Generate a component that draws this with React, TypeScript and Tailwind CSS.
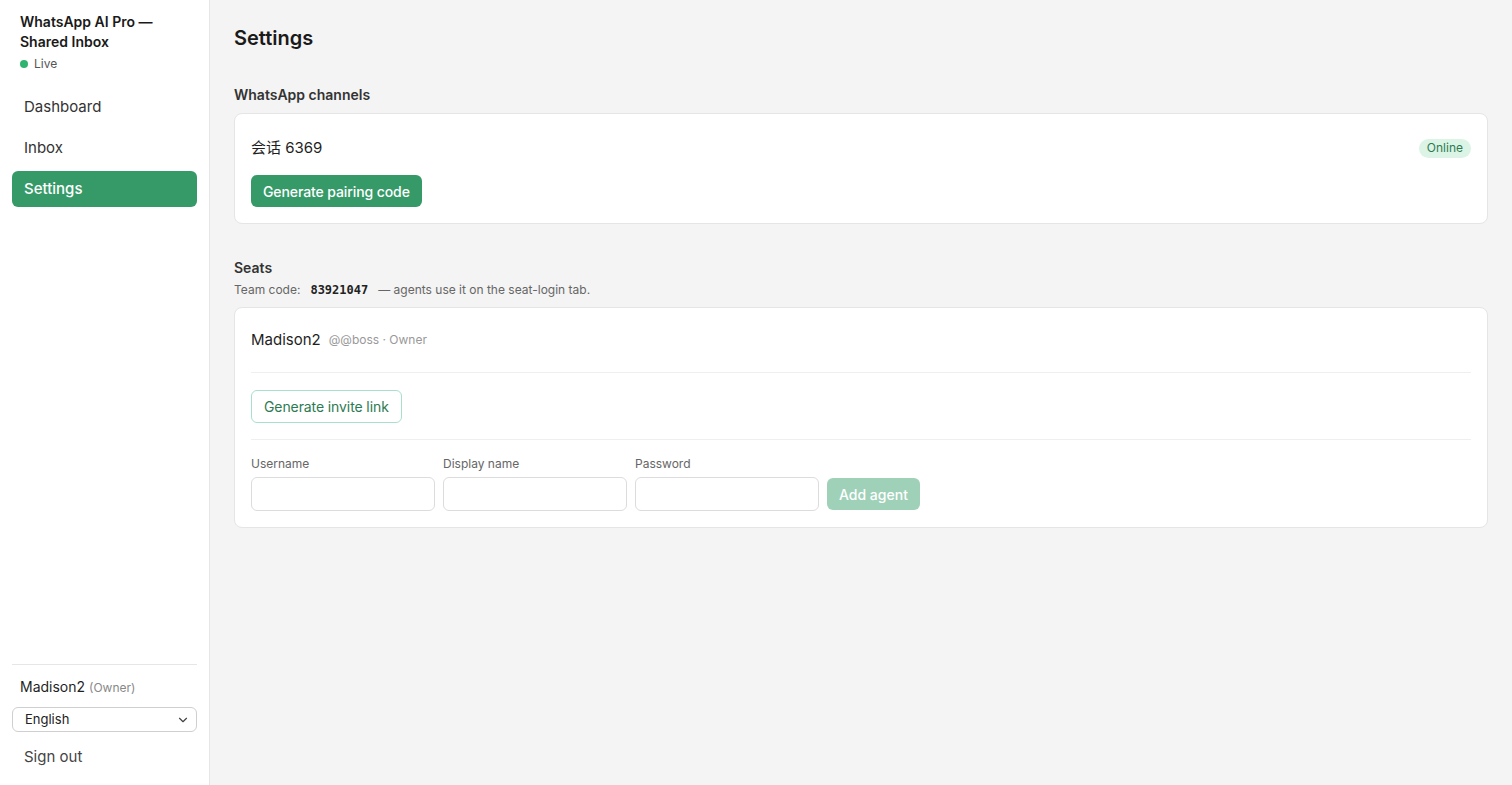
import { ChevronDown } from "lucide-react"

const font = { fontFamily: "Inter, 'Noto Sans CJK SC', sans-serif" }

function NavItem({ label, active }: { label: string; active?: boolean }) {
  return (
    <div
      className={
        active
          ? "h-9 flex items-center px-3 rounded-md bg-[#359a68] text-white text-[15px] font-medium"
          : "h-9 flex items-center px-3 rounded-md text-[#333] text-[15px]"
      }
    >
      {label}
    </div>
  )
}

function Field({ label }: { label: string }) {
  return (
    <div className="flex flex-col">
      <label className="text-[12px] text-[#666] leading-4 mb-[5px]">{label}</label>
      <input className="w-[184px] h-[34px] rounded-md border border-[#dcdcdc] bg-white px-2 text-sm outline-none" />
    </div>
  )
}

export default function App() {
  return (
    <div className="flex h-[785px] w-full bg-[#f4f4f4] text-[#1f1f1f]" style={font}>
      <aside className="w-[210px] shrink-0 bg-white border-r border-[#e6e6e6] flex flex-col px-3 pt-3 pb-[10px]">
        <div className="px-2">
          <div className="text-[14px] font-semibold leading-5 text-[#1a1a1a]">
            WhatsApp AI Pro —<br />Shared Inbox
          </div>
          <div className="flex items-center gap-1.5 text-[12px] leading-4 text-[#555] mt-1">
            <span className="w-2 h-2 rounded-full bg-[#2fb36e]" />
            Live
          </div>
        </div>
        <nav className="flex flex-col gap-[5px] mt-[17px]">
          <NavItem label="Dashboard" />
          <NavItem label="Inbox" />
          <NavItem label="Settings" active />
        </nav>
        <div className="mt-auto border-t border-[#e6e6e6] pt-3">
          <div className="px-2 text-[14px] leading-5 text-[#1f1f1f]">
            Madison2 <span className="text-[12px] text-[#888]">(Owner)</span>
          </div>
          <div className="mt-[9px] h-[25px] rounded-md border border-[#cfcfcf] flex items-center justify-between pl-3 pr-1.5 text-[13px] text-[#222]">
            English
            <ChevronDown size={14} strokeWidth={2} className="text-[#444]" />
          </div>
          <div className="px-3 h-9 flex items-center text-[15px] text-[#444] mt-[7px]">Sign out</div>
        </div>
      </aside>

      <main className="flex-1 px-6 pt-6">
        <h1 className="text-[20px] leading-7 font-semibold text-[#1a1a1a]">Settings</h1>

        <section className="mt-[33px]">
          <h2 className="text-[14px] leading-5 font-semibold text-[#333] mb-2">WhatsApp channels</h2>
          <div className="bg-white border border-[#e5e5e5] rounded-lg px-4 pt-4 pb-4">
            <div className="h-9 flex items-center justify-between">
              <span className="text-[15px] text-[#1f1f1f]">会话 6369</span>
              <span className="px-2 h-[19px] flex items-center rounded-full bg-[#dcf4e6] text-[#2d7a52] text-[12px]">
                Online
              </span>
            </div>
            <button className="mt-[9px] h-8 px-3 rounded-md bg-[#359a68] text-white text-[14px] font-medium tracking-[-0.1px]">
              Generate pairing code
            </button>
          </div>
        </section>

        <section className="mt-[34px]">
          <h2 className="text-[14px] leading-5 font-semibold text-[#333]">Seats</h2>
          <p className="text-[12px] leading-5 text-[#666] mt-0.5 mb-[7px] flex items-center">
            Team code:
            <code className="mx-2.5 font-bold text-[#222]" style={{ fontFamily: "'DejaVu Sans Mono', monospace" }}>
              83921047
            </code>
            — agents use it on the seat-login tab.
          </p>
          <div className="bg-white border border-[#e5e5e5] rounded-lg px-4">
            <div className="pt-4 pb-4 border-b border-[#efefef]">
              <div className="h-8 flex items-center gap-2">
                <span className="text-[15px] text-[#1f1f1f]">Madison2</span>
                <span className="text-[12px] text-[#999]">@@boss · Owner</span>
              </div>
            </div>
            <div className="pt-[17px] pb-[16px] border-b border-[#efefef]">
              <button className="h-[33px] px-3 rounded-md border border-[#a8e0cc] text-[#2d7a52] text-[14px] bg-white tracking-[-0.1px]">
                Generate invite link
              </button>
            </div>
            <div className="pt-4 pb-4 flex items-end gap-2">
              <Field label="Username" />
              <Field label="Display name" />
              <Field label="Password" />
              <button className="h-8 mb-px px-3 rounded-md bg-[#9fd1b9] text-white text-[14px] font-medium">
                Add agent
              </button>
            </div>
          </div>
        </section>
      </main>
    </div>
  )
}
